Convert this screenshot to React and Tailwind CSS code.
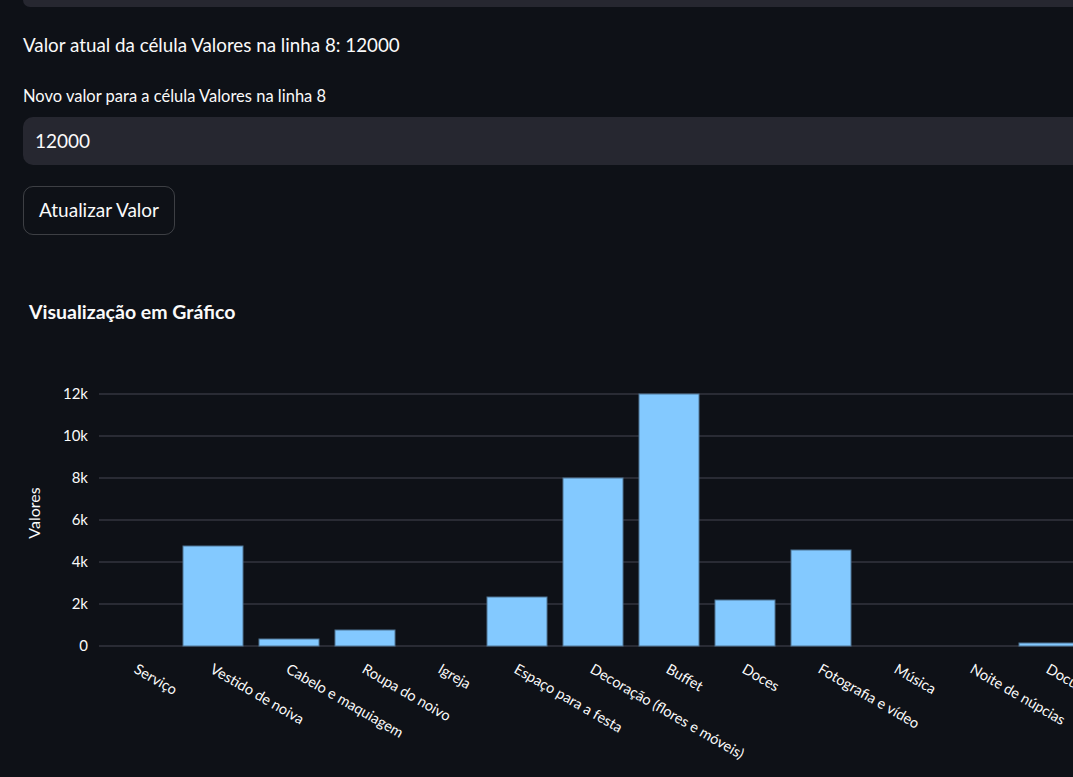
const bars = [
  { label: "Serviço", h: 0 },
  { label: "Vestido de noiva", h: 100 },
  { label: "Cabelo e maquiagem", h: 7 },
  { label: "Roupa do noivo", h: 16 },
  { label: "Igreja", h: 0 },
  { label: "Espaço para a festa", h: 49 },
  { label: "Decoração (flores e móveis)", h: 168 },
  { label: "Buffet", h: 252 },
  { label: "Doces", h: 46 },
  { label: "Fotografia e vídeo", h: 96 },
  { label: "Música", h: 0 },
  { label: "Noite de núpcias", h: 0 },
  { label: "Documentação", h: 3 },
];

const ticks = ["0", "2k", "4k", "6k", "8k", "10k", "12k"];
const font = "Lato, 'Noto Sans', sans-serif";

function BarChart() {
  return (
    <svg width="1073" height="437" viewBox="0 340 1073 437" className="block">
      {ticks.map((t, i) => {
        const y = 646 - i * 42;
        return (
          <g key={t}>
            <line x1="99" x2="1073" y1={y} y2={y} stroke="#33353f" strokeWidth="1.5" />
            <text x="88" y={y + 5} textAnchor="end" fill="#fafafa" fontSize="15" fontFamily={font}>
              {t}
            </text>
          </g>
        );
      })}
      <text
        x="40"
        y="513"
        transform="rotate(-90 40 513)"
        textAnchor="middle"
        fill="#fafafa"
        fontSize="16"
        fontFamily={font}
      >
        Valores
      </text>
      {bars.map((b, i) => {
        const cx = 137 + i * 76;
        return (
          <g key={b.label}>
            {b.h > 0 && (
              <rect
                x={cx - 30}
                y={646 - b.h}
                width="60"
                height={b.h}
                fill="#83c9ff"
                stroke="#4f7594"
                strokeWidth="1"
              />
            )}
            <text
              x={cx - 4}
              y="672"
              transform={`rotate(30 ${cx - 4} 672)`}
              fill="#fafafa"
              fontSize="14.5"
              fontFamily={font}
            >
              {b.label}
            </text>
          </g>
        );
      })}
    </svg>
  );
}

export default function App() {
  return (
    <div className="h-[777px] w-full overflow-hidden bg-[#0e1117] text-[#fafafa] font-['Lato','Noto_Sans',sans-serif]">
      <div className="pl-[23px]">
        {/* previous input, scrolled off */}
        <div className="h-[7px] w-[1100px] rounded-b-[10px] bg-[#262730]" />

        <p className="mt-[26px] text-[18.8px] leading-[24px]">
          Valor atual da célula Valores na linha 8: 12000
        </p>

        <label className="mt-[29px] block text-[16.5px] leading-[20px]">
          Novo valor para a célula Valores na linha 8
        </label>
        <div className="mt-[11px] flex h-[48px] w-[1100px] items-center rounded-[10px] bg-[#262730] pl-[12px] text-[19px]">
          12000
        </div>

        <button className="mt-[21px] h-[49px] w-[152px] rounded-[10px] border border-[#fafafa]/20 bg-transparent text-[19px]">
          Atualizar Valor
        </button>

        <h3 className="ml-[6px] mt-[65px] text-[19.5px] font-bold leading-[24px]">
          Visualização em Gráfico
        </h3>
      </div>

      <div className="mt-[16px]">
        <BarChart />
      </div>
    </div>
  );
}
